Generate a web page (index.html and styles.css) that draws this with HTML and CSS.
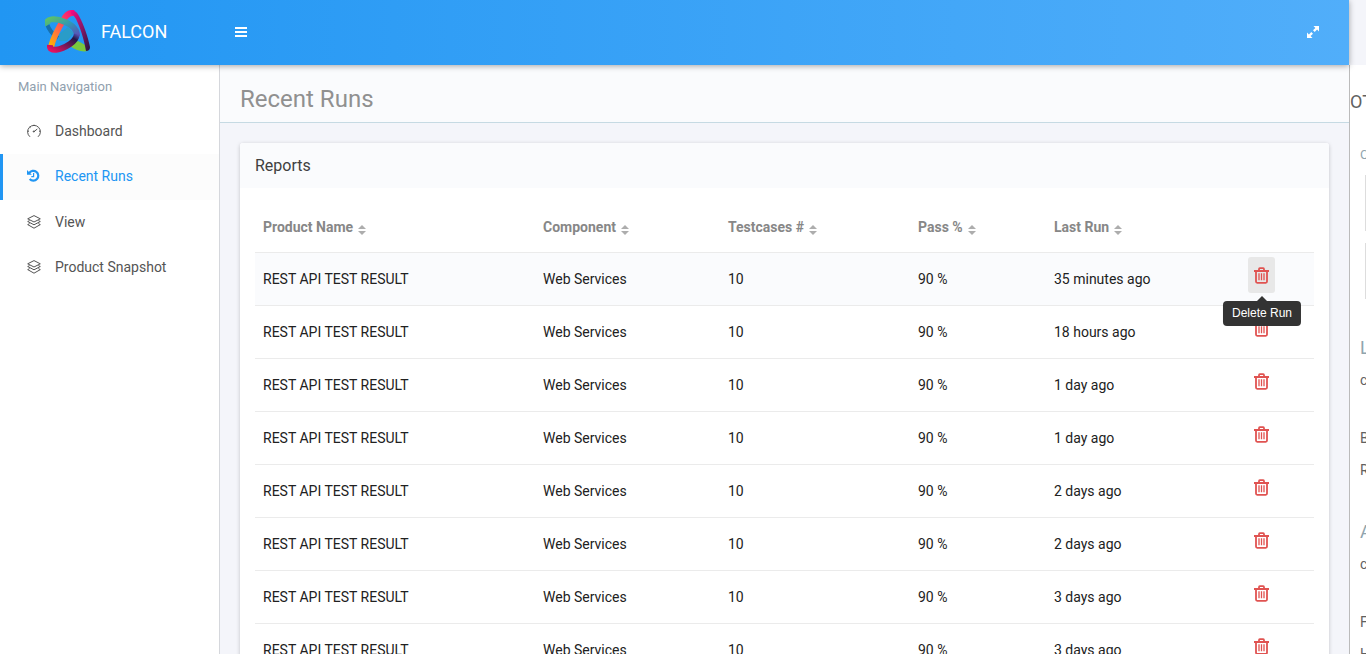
FILE: index.html
```html
<!DOCTYPE html>
<html lang="en">
<head>
<meta charset="utf-8">
<title>Falcon - Recent Runs</title>
<link rel="stylesheet" href="styles.css">
</head>
<body>
<svg class="defs" aria-hidden="true">
  <defs>
    <symbol id="layers" viewBox="0 0 14 14"><path d="M7 .6 13.3 3.8 7 7 .7 3.8ZM2.6 5.6.7 6.5 7 9.8l6.3-3.3-1.9-.9M2.6 8.6.7 9.6 7 13.2l6.3-3.6-1.9-1" fill="none" stroke="currentColor" stroke-width="1"/></symbol>
    <symbol id="trash" viewBox="0 0 15 17"><path d="M0 4h15M5 4V2.2Q5 1.2 5.8 1.2H9.2Q10 1.2 10 2.2V4M2 4.2V14.6Q2 15.8 3.2 15.8H11.8Q13 15.8 13 14.6V4.2" fill="none" stroke="currentColor" stroke-width="1.8"/><path d="M5 6.3V13.2M7.5 6.3V13.2M10 6.3V13.2" stroke="currentColor" stroke-width="1.3"/></symbol>
    <symbol id="sort" viewBox="0 0 8 10"><path d="M0 4 4 0 8 4ZM0 6H8L4 10Z" fill="currentColor"/></symbol>
  </defs>
</svg>
<div class="app">
  <header class="topbar">
    <a class="brand" href="#">
      <svg class="logo" viewBox="0 0 46 44" fill="none" aria-hidden="true">
        <defs>
          <linearGradient id="g1" x1="0" y1="1" x2="1" y2="0"><stop offset="0" stop-color="#ffb300"/><stop offset=".4" stop-color="#ff6a45"/><stop offset="1" stop-color="#fa0a80"/></linearGradient>
          <linearGradient id="g2" x1="0" y1="0" x2="1" y2="1"><stop offset="0" stop-color="#f50a83"/><stop offset=".5" stop-color="#8b1767"/><stop offset="1" stop-color="#21173f"/></linearGradient>
          <linearGradient id="g3" x1="0" y1="0" x2="1" y2="1"><stop offset="0" stop-color="#5cc06a"/><stop offset=".5" stop-color="#3098b4"/><stop offset="1" stop-color="#5a50b8"/></linearGradient>
          <linearGradient id="g4" x1="0" y1="1" x2="1" y2="0"><stop offset="0" stop-color="#e9105f"/><stop offset=".45" stop-color="#731858"/><stop offset=".8" stop-color="#251645"/><stop offset="1" stop-color="#5552b5"/></linearGradient>
          <linearGradient id="g5" x1="0" y1="0" x2="1" y2="1"><stop offset="0" stop-color="#146caa"/><stop offset=".5" stop-color="#2aa2bd"/><stop offset="1" stop-color="#7ccb31"/></linearGradient>
        </defs>
        <path d="M2 14C4 20 7 24 13 28" stroke="#1670ae" stroke-width="4"/>
        <path d="M14 24 23 17 29 23 22 31 14 31Z" fill="#2a9cc8"/>
        <path d="M25 36 33 31 42 36 43 41Q34 43 25 36Z" fill="#79c83d"/>
        <path d="M6 37C8 29 14 17 19 9Q23 2 29 3" stroke="url(#g1)" stroke-width="6"/>
        <path d="M26 1Q31 0 34 6C39 15 43 27 45 37Q45 41 41 41C39 29 35 17 31 9Q29 5 26 4Z" fill="url(#g2)"/>
        <path d="M3 15C-1 8 11 8 20 12Q32 17 32 26" stroke="url(#g3)" stroke-width="6"/>
        <path d="M5 35C4 43 16 40 25 34Q31 30 32 24" stroke="url(#g4)" stroke-width="6"/>
      </svg>
      <span>FALCON</span>
    </a>
    <button class="bar-button" aria-label="Toggle navigation"><svg viewBox="0 0 12 10" width="12" height="10"><path d="M0 1h12M0 5h12M0 9h12" stroke="currentColor" stroke-width="2"/></svg></button>
    <button class="bar-button expand" aria-label="Toggle full screen"><svg viewBox="0 0 12 12" width="12" height="12" fill="currentColor"><path d="M6.5 0H12V5.5L10.1 3.6 7.7 6 6 4.3 8.4 1.9ZM0 6.5 1.9 8.4 4.3 6 6 7.7 3.6 10.1 5.5 12H0Z"/></svg></button>
  </header>
  <div class="body">
    <nav class="sidebar" aria-label="Main">
      <div class="nav-title">Main Navigation</div>
      <a class="nav-item" href="#"><svg class="nav-icon" viewBox="0 0 14 14" fill="none" stroke="currentColor"><path d="M3 12.8A6.4 6.4 0 1 1 11 12.8M7 7.6 10.3 5M7 .7V2M.7 7.2H2M12 7.2h1.3M2.7 2.8l.8.8"/><circle cx="6.8" cy="7.5" r=".6" fill="currentColor"/></svg>Dashboard</a>
      <a class="nav-item active" href="#" aria-current="page"><svg class="nav-icon" viewBox="0 0 14 14" fill="none" stroke="currentColor"><path d="M2.2 4.2A4.9 4.9 0 1 1 2.7 10" stroke-width="2.2"/><path d="M0 1V5.8H4.8Z" fill="currentColor" stroke="none"/><path d="M6.6 4V7.6H4.3" stroke-width="1.2"/></svg>Recent Runs</a>
      <a class="nav-item" href="#"><svg class="nav-icon"><use href="#layers"/></svg>View</a>
      <a class="nav-item" href="#"><svg class="nav-icon"><use href="#layers"/></svg>Product Snapshot</a>
    </nav>
    <main class="content">
      <h1 class="page-title">Recent Runs</h1>
      <section class="card">
        <h2 class="card-title">Reports</h2>
        <div class="card-body">
          <table class="runs">
            <colgroup><col class="c-name"><col class="c-component"><col class="c-cases"><col class="c-pass"><col class="c-last"><col class="c-action"></colgroup>
            <thead><tr>
              <th>Product Name<svg class="sort"><use href="#sort"/></svg></th>
              <th>Component<svg class="sort"><use href="#sort"/></svg></th>
              <th>Testcases #<svg class="sort"><use href="#sort"/></svg></th>
              <th>Pass %<svg class="sort"><use href="#sort"/></svg></th>
              <th>Last Run<svg class="sort"><use href="#sort"/></svg></th>
              <td></td>
            </tr></thead>
            <tbody>
              <tr class="hovered"><td>REST API TEST RESULT</td><td>Web Services</td><td>10</td><td>90 %</td><td>35 minutes ago</td><td class="action"><button class="delete" aria-label="Delete Run"><svg class="trash"><use href="#trash"/></svg></button><span class="tooltip" role="tooltip">Delete Run</span></td></tr>
              <tr><td>REST API TEST RESULT</td><td>Web Services</td><td>10</td><td>90 %</td><td>18 hours ago</td><td class="action"><button class="delete" aria-label="Delete Run"><svg class="trash"><use href="#trash"/></svg></button></td></tr>
              <tr><td>REST API TEST RESULT</td><td>Web Services</td><td>10</td><td>90 %</td><td>1 day ago</td><td class="action"><button class="delete" aria-label="Delete Run"><svg class="trash"><use href="#trash"/></svg></button></td></tr>
              <tr><td>REST API TEST RESULT</td><td>Web Services</td><td>10</td><td>90 %</td><td>1 day ago</td><td class="action"><button class="delete" aria-label="Delete Run"><svg class="trash"><use href="#trash"/></svg></button></td></tr>
              <tr><td>REST API TEST RESULT</td><td>Web Services</td><td>10</td><td>90 %</td><td>2 days ago</td><td class="action"><button class="delete" aria-label="Delete Run"><svg class="trash"><use href="#trash"/></svg></button></td></tr>
              <tr><td>REST API TEST RESULT</td><td>Web Services</td><td>10</td><td>90 %</td><td>2 days ago</td><td class="action"><button class="delete" aria-label="Delete Run"><svg class="trash"><use href="#trash"/></svg></button></td></tr>
              <tr><td>REST API TEST RESULT</td><td>Web Services</td><td>10</td><td>90 %</td><td>3 days ago</td><td class="action"><button class="delete" aria-label="Delete Run"><svg class="trash"><use href="#trash"/></svg></button></td></tr>
              <tr><td>REST API TEST RESULT</td><td>Web Services</td><td>10</td><td>90 %</td><td>3 days ago</td><td class="action"><button class="delete" aria-label="Delete Run"><svg class="trash"><use href="#trash"/></svg></button></td></tr>
            </tbody>
          </table>
        </div>
      </section>
    </main>
  </div>
</div>
<aside class="drawer">
  <div class="drawer-tab">OT</div>
  <div class="drawer-body">
    <div class="drawer-label">C</div>
    <div class="swatch"></div>
    <div class="swatch"></div>
    <div class="drawer-heading">L</div>
    <div class="drawer-row">c</div>
    <div class="drawer-row spaced">B</div>
    <div class="drawer-row">R</div>
    <div class="drawer-heading second">A</div>
    <div class="drawer-row">c</div>
    <div class="drawer-row spaced">F</div>
    <div class="drawer-row">H</div>
  </div>
</aside>
</body>
</html>
```
FILE: styles.css
```css
* { box-sizing: border-box; }
body {
  margin: 0;
  height: 100vh;
  display: flex;
  overflow: hidden;
  background: #f4f5fa;
  color: #212121;
  font: 14px/20px Roboto, "Liberation Sans", sans-serif;
}
button { border: 0; padding: 0; background: none; color: inherit; font: inherit; }
a { color: inherit; text-decoration: none; }
.defs { position: absolute; width: 0; height: 0; }

.app { flex: 1; min-width: 0; display: flex; flex-direction: column; }
.topbar {
  flex: none;
  position: relative;
  z-index: 2;
  height: 65px;
  display: flex;
  align-items: center;
  padding: 0 30px 1px 0;
  color: #fff;
  background: linear-gradient(90deg, #2196f3, #51aefa);
  box-shadow: 0 1px 6px rgba(0, 0, 0, .35);
}
.brand { width: 235px; padding-left: 45px; display: flex; align-items: center; gap: 10px; font-size: 18px; }
.logo { width: 46px; height: 44px; }
.bar-button { display: flex; }
.expand { margin-left: auto; }

.body { flex: 1; min-height: 0; display: flex; }
.sidebar { flex: none; width: 220px; background: #fff; border-right: 1px solid #d5d7dc; }
.nav-title { height: 44px; padding: 12px 18px; color: #90a0ae; font-size: 13px; }
.nav-item { height: 45px; display: flex; align-items: center; gap: 14px; padding: 0 0 1px 24px; border-left: 3px solid transparent; color: #545454; font-size: 14px; }
.nav-item.active { height: 46px; padding-bottom: 2px; color: #2196f3; background: #fcfcfc; border-left-color: #2196f3; }
.nav-icon { width: 14px; height: 14px; }

.content { flex: 1; min-width: 0; overflow: hidden; }
.page-title { margin: 0; padding: 18px 20px 7px; background: #fafbfd; border-bottom: 1px solid #c6dae3; color: #909090; font-size: 24px; line-height: 32px; font-weight: 400; }
.card { margin: 20px; background: #fff; border-radius: 3px; box-shadow: 0 1px 4px rgba(0, 0, 0, .2); }
.card-title { margin: 0; padding: 12px 15px; border-radius: 3px 3px 0 0; background: #fafbfd; color: #404040; font-size: 16px; line-height: 21px; font-weight: 400; }
.card-body { padding: 15px; }
.runs { width: 100%; table-layout: fixed; border-collapse: separate; border-spacing: 0; }
.c-name { width: 280px; }
.c-component { width: 185px; }
.c-cases { width: 190px; }
.c-pass { width: 136px; }
.c-last { width: 194px; }
.c-action { width: 74px; }
.runs th { height: 49px; padding: 0 8px 2px; text-align: left; color: #878787; font-weight: 700; }
.runs td { padding: 0 8px; }
.runs tbody td { height: 53px; border-top: 1px solid #ebebeb; }
.hovered td { background: #fafbfd; }
.sort { width: 8px; height: 10px; margin-left: 5px; vertical-align: -3px; color: #adadad; }
.runs .action { position: relative; padding: 4px 8px 12px; }
.delete { display: flex; align-items: center; justify-content: center; width: 27px; height: 36px; border-radius: 3px; color: #e05351; }
.hovered .delete { background: #e8e8e8; }
.trash { width: 15px; height: 17px; }
.tooltip {
  position: absolute;
  z-index: 1;
  top: 48px;
  left: 22px;
  transform: translateX(-50%);
  padding: 3px 9px;
  border-radius: 4px;
  background: #333;
  color: #fff;
  font: 12px/19px "Liberation Sans", Arial, sans-serif;
  white-space: nowrap;
}
.tooltip::before { content: ""; position: absolute; left: 50%; bottom: 100%; margin-left: -5px; border: 5px solid transparent; border-top: 0; border-bottom-color: #333; }

.drawer { flex: none; width: 17px; margin-top: 65px; overflow: hidden; background: #fff; border-left: 1px solid #bbb; color: #616161; white-space: nowrap; }
.drawer-tab { padding-top: 24px; font-size: 18px; line-height: 26px; }
.drawer-body { padding: 30px 0 0 10px; }
.drawer-label { margin-bottom: 10px; color: #90a4ae; font-size: 13px; }
.swatch { width: 100px; height: 56px; margin: 0 0 12px 5px; border: 1px solid #ddd; }
.drawer-heading { padding: 24px 0 3px; color: #90a4ae; font-size: 18px; line-height: 26px; }
.drawer-heading.second { padding-top: 33px; }
.drawer-row { height: 32px; line-height: 32px; }
.spaced { margin-top: 26px; }
```
